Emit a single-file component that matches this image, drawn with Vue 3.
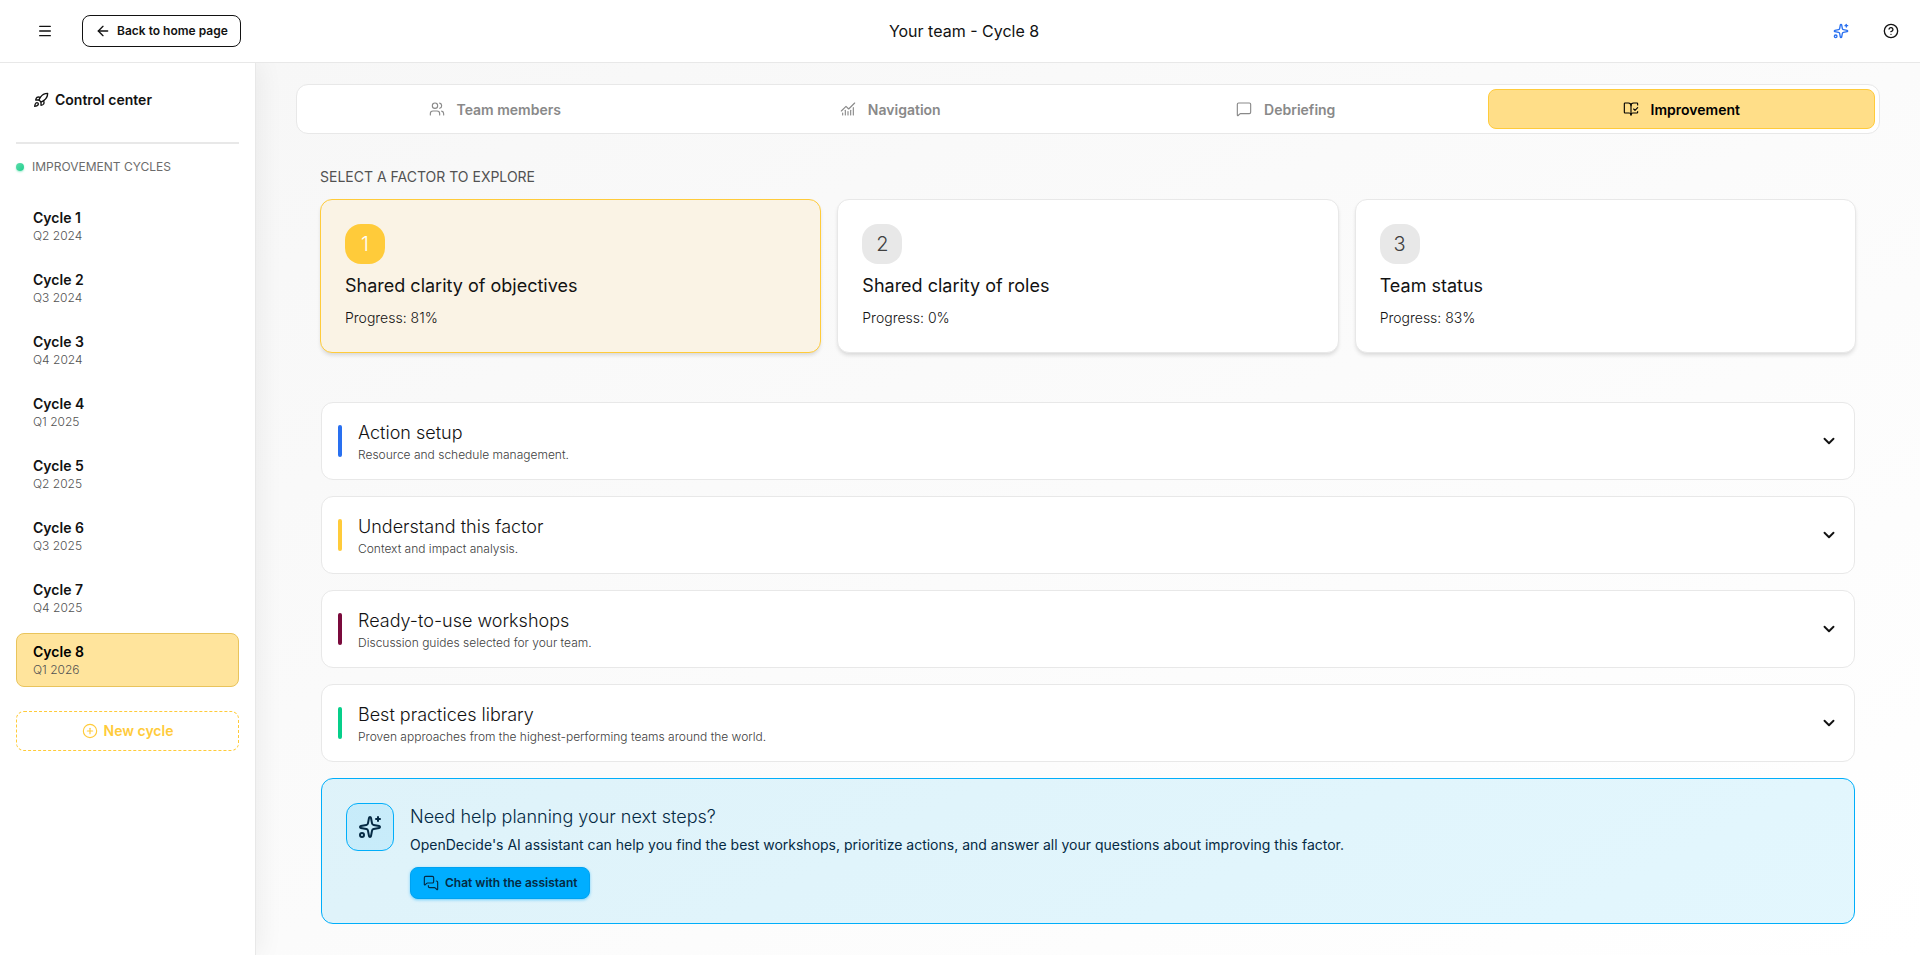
<script setup>
import { ref } from 'vue'

const icons = {
  menu: ['M4 5h16', 'M4 12h16', 'M4 19h16'],
  back: ['m12 19-7-7 7-7', 'M19 12H5'],
  help: ['M12 2a10 10 0 1 0 0 20 10 10 0 0 0 0-20', 'M9.09 9a3 3 0 0 1 5.83 1c0 2-3 3-3 3', 'M12 17h.01'],
  rocket: [
    'M4.5 16.5c-1.5 1.26-2 5-2 5s3.74-.5 5-2c.71-.84.7-2.13-.09-2.91a2.18 2.18 0 0 0-2.91-.09z',
    'm12 15-3-3a22 22 0 0 1 2-3.95A12.88 12.88 0 0 1 22 2c0 2.72-.78 7.5-6 11a22.35 22.35 0 0 1-4 2z',
    'M9 12H4s.55-3.03 2-4c1.62-1.08 5 0 5 0',
    'M12 15v5s3.03-.55 4-2c1.08-1.62 0-5 0-5',
  ],
  users: [
    'M16 21v-2a4 4 0 0 0-4-4H6a4 4 0 0 0-4 4v2',
    'M9 3a4 4 0 1 0 0 8 4 4 0 0 0 0-8',
    'M22 21v-2a4 4 0 0 0-3-3.87',
    'M16 3.13a4 4 0 0 1 0 7.75',
  ],
  chart: [
    'M12 16v5', 'M16 14v7', 'M20 10v11', 'M4 18v3', 'M8 14v7',
    'm22 3-8.646 8.646a.5.5 0 0 1-.708 0L9.354 8.354a.5.5 0 0 0-.707 0L2 15',
  ],
  message: ['M22 17a2 2 0 0 1-2 2H6.828a2 2 0 0 0-1.414.586l-2.202 2.202A.71.71 0 0 1 2 21.286V5a2 2 0 0 1 2-2h16a2 2 0 0 1 2 2z'],
  book: [
    'M12 21V7',
    'm16 12 2 2 4-4',
    'M22 6V4a1 1 0 0 0-1-1h-5a4 4 0 0 0-4 4 4 4 0 0 0-4-4H3a1 1 0 0 0-1 1v13a1 1 0 0 0 1 1h6a3 3 0 0 1 3 3 3 3 0 0 1 3-3h6a1 1 0 0 0 1-1v-1.3',
  ],
  sparkles: [
    'M11.017 2.814a1 1 0 0 1 1.966 0l1.051 5.558a2 2 0 0 0 1.594 1.594l5.558 1.051a1 1 0 0 1 0 1.966l-5.558 1.051a2 2 0 0 0-1.594 1.594l-1.051 5.558a1 1 0 0 1-1.966 0l-1.051-5.558a2 2 0 0 0-1.594-1.594l-5.558-1.051a1 1 0 0 1 0-1.966l5.558-1.051a2 2 0 0 0 1.594-1.594z',
    'M20 2v4', 'M22 4h-4', 'M4 18a2 2 0 1 0 0 4 2 2 0 0 0 0-4',
  ],
  plus: ['M12 2a10 10 0 1 0 0 20 10 10 0 0 0 0-20', 'M8 12h8', 'M12 8v8'],
  chevron: ['m6 9 6 6 6-6'],
  chat: [
    'M16 10a2 2 0 0 1-2 2H6.828a2 2 0 0 0-1.414.586l-2.202 2.202A.71.71 0 0 1 2 14.286V4a2 2 0 0 1 2-2h10a2 2 0 0 1 2 2z',
    'M20 9a2 2 0 0 1 2 2v10.286a.71.71 0 0 1-1.212.502l-2.202-2.202A2 2 0 0 0 17.172 19H10a2 2 0 0 1-2-2v-1',
  ],
}

const cycles = [
  'Q2 2024', 'Q3 2024', 'Q4 2024', 'Q1 2025', 'Q2 2025', 'Q3 2025', 'Q4 2025', 'Q1 2026',
].map((quarter, i) => ({ id: i + 1, quarter }))
const activeCycle = ref(8)

const tabs = [
  { name: 'Team members', icon: 'users' },
  { name: 'Navigation', icon: 'chart' },
  { name: 'Debriefing', icon: 'message' },
  { name: 'Improvement', icon: 'book' },
]
const activeTab = ref('Improvement')

const factors = [
  { id: 1, name: 'Shared clarity of objectives', progress: 81 },
  { id: 2, name: 'Shared clarity of roles', progress: 0 },
  { id: 3, name: 'Team status', progress: 83 },
]
const activeFactor = ref(1)

const sections = [
  { title: 'Action setup', text: 'Resource and schedule management.', tone: 'blue' },
  { title: 'Understand this factor', text: 'Context and impact analysis.', tone: 'yellow' },
  { title: 'Ready-to-use workshops', text: 'Discussion guides selected for your team.', tone: 'wine' },
  { title: 'Best practices library', text: 'Proven approaches from the highest-performing teams around the world.', tone: 'green' },
]
</script>

<template>
  <div class="app">
    <header class="topbar">
      <div class="side">
        <button class="icon-btn wide" type="button" aria-label="Toggle menu">
          <svg class="icon s16" viewBox="0 0 24 24"><path v-for="d in icons.menu" :key="d" :d="d" /></svg>
        </button>
        <a class="back" href="#">
          <svg class="icon s16" viewBox="0 0 24 24"><path v-for="d in icons.back" :key="d" :d="d" /></svg>
          Back to home page
        </a>
      </div>
      <h1 class="title">Your team - Cycle 8</h1>
      <div class="side end">
        <button class="icon-btn blue" type="button" aria-label="AI assistant">
          <svg class="icon s16" viewBox="0 0 24 24"><path v-for="d in icons.sparkles" :key="d" :d="d" /></svg>
        </button>
        <button class="icon-btn" type="button" aria-label="Help">
          <svg class="icon s16" viewBox="0 0 24 24"><path v-for="d in icons.help" :key="d" :d="d" /></svg>
        </button>
      </div>
    </header>

    <div class="body">
      <aside class="sidebar">
        <a class="control" href="#">
          <svg class="icon s16" viewBox="0 0 24 24"><path v-for="d in icons.rocket" :key="d" :d="d" /></svg>
          Control center
        </a>
        <hr class="rule">
        <h2 class="side-title"><span class="dot"></span>Improvement cycles</h2>
        <nav class="cycles" aria-label="Improvement cycles">
          <button
            v-for="c in cycles" :key="c.id" type="button"
            :class="['cycle', { active: c.id === activeCycle }]" @click="activeCycle = c.id"
          >
            <span class="cycle-name">Cycle {{ c.id }}</span>
            <span class="cycle-date">{{ c.quarter }}</span>
          </button>
        </nav>
        <button class="new-cycle" type="button">
          <svg class="icon s16 thin" viewBox="0 0 24 24"><path v-for="d in icons.plus" :key="d" :d="d" /></svg>
          New cycle
        </button>
      </aside>

      <main class="main">
        <nav class="tabs" aria-label="Cycle sections">
          <button
            v-for="t in tabs" :key="t.name" type="button"
            :class="['tab', { active: t.name === activeTab }]" @click="activeTab = t.name"
          >
            <svg class="icon s16 thin" viewBox="0 0 24 24"><path v-for="d in icons[t.icon]" :key="d" :d="d" /></svg>
            {{ t.name }}
          </button>
        </nav>

        <div class="content">
          <h2 class="heading">Select a factor to explore</h2>
          <div class="factors">
            <button
              v-for="f in factors" :key="f.id" type="button"
              :class="['factor', { active: f.id === activeFactor }]" @click="activeFactor = f.id"
            >
              <span class="number">{{ f.id }}</span>
              <span class="factor-name">{{ f.name }}</span>
              <span class="progress">Progress: {{ f.progress }}%</span>
            </button>
          </div>

          <div class="stack">
            <button v-for="s in sections" :key="s.title" class="section" type="button" aria-expanded="false">
              <span :class="['bar', s.tone]"></span>
              <span class="section-body">
                <span class="section-title">{{ s.title }}</span>
                <span class="section-text">{{ s.text }}</span>
              </span>
              <svg class="icon s18" viewBox="0 0 24 24"><path v-for="d in icons.chevron" :key="d" :d="d" /></svg>
            </button>

            <section class="help">
              <span class="help-icon">
                <svg class="icon s24" viewBox="0 0 24 24"><path v-for="d in icons.sparkles" :key="d" :d="d" /></svg>
              </span>
              <div class="help-body">
                <h3 class="help-title">Need help planning your next steps?</h3>
                <p class="help-text">OpenDecide's AI assistant can help you find the best workshops, prioritize actions, and answer all your questions about improving this factor.</p>
                <button class="chat" type="button">
                  <svg class="icon s16 thin" viewBox="0 0 24 24"><path v-for="d in icons.chat" :key="d" :d="d" /></svg>
                  Chat with the assistant
                </button>
              </div>
            </section>
          </div>
        </div>
      </main>
    </div>
  </div>
</template>

<style>
body {
  margin: 0;
}
</style>

<style scoped>
.app {
  display: flex;
  flex-direction: column;
  min-height: 100vh;
  font-family: Inter, "Liberation Sans", sans-serif;
  font-size: 14px;
  line-height: 20px;
  color: #121212;
  background: #fff;
}
.app * {
  box-sizing: border-box;
}
button {
  font: inherit;
  color: inherit;
  cursor: pointer;
}
a {
  color: inherit;
  text-decoration: none;
}
h1, h2, h3, p {
  margin: 0;
}
.icon {
  flex: none;
  fill: none;
  stroke: currentColor;
  stroke-width: 2;
  stroke-linecap: round;
  stroke-linejoin: round;
}
.s16 {
  width: 16px;
  height: 16px;
}
.s18 {
  width: 18px;
  height: 18px;
  stroke-width: 2.5;
}
.s24 {
  width: 24px;
  height: 24px;
}
.thin {
  stroke-width: 1.7;
}

.topbar {
  position: relative;
  z-index: 1;
  display: flex;
  align-items: center;
  padding: 15px 16px 15px 24px;
  border-bottom: 1px solid #e8e8e8;
  background: #fff;
}
.side {
  display: flex;
  flex: 1;
  align-items: center;
  gap: 16px;
}
.side.end {
  justify-content: flex-end;
  gap: 24px;
}
.icon-btn {
  display: grid;
  place-items: center;
  width: 26px;
  height: 32px;
  padding: 0;
  border: 0;
  background: none;
}
.icon-btn.wide {
  width: 42px;
}
.icon-btn.blue {
  color: #2970f0;
}
.back {
  display: flex;
  align-items: center;
  gap: 6px;
  height: 32px;
  padding: 0 12px;
  border: 1px solid #121212;
  border-radius: 8px;
  font-size: 12px;
  font-weight: 600;
}
.title {
  font-size: 16px;
  line-height: 24px;
  font-weight: 400;
}

.body {
  display: flex;
  flex: 1;
}
.sidebar {
  position: relative;
  flex: none;
  width: 256px;
  padding: 16px;
  border-right: 1px solid #e8e8e8;
  background: #fff;
  box-shadow: 4px 0 24px rgba(0, 0, 0, 0.06);
}
.control {
  display: flex;
  align-items: center;
  gap: 6px;
  height: 42px;
  padding: 0 17px;
  font-weight: 600;
}
.rule {
  height: 2px;
  margin: 21px 0 13px;
  border: 0;
  background: #e8e8e8;
}
.side-title {
  display: flex;
  align-items: center;
  gap: 8px;
  margin-bottom: 22px;
  font-size: 12px;
  font-weight: 400;
  text-transform: uppercase;
  color: #6b6b6b;
}
.dot {
  width: 8px;
  height: 8px;
  border-radius: 50%;
  background: linear-gradient(135deg, #5fdcab, #1fcf8d);
  box-shadow: 0 1px 2px rgba(31, 207, 141, 0.4);
}
.cycles {
  display: flex;
  flex-direction: column;
  gap: 8px;
}
.cycle {
  display: flex;
  flex-direction: column;
  justify-content: center;
  width: 100%;
  height: 54px;
  padding: 0 16px;
  border: 1px solid transparent;
  border-radius: 8px;
  background: none;
  text-align: left;
}
.cycle.active {
  border-color: #e9c45c;
  background: #ffe49c;
  color: #000;
}
.cycle-name {
  font-weight: 600;
}
.cycle-date {
  font-size: 12px;
  line-height: 16px;
  font-weight: 300;
  color: #525252;
}
.new-cycle {
  display: flex;
  align-items: center;
  justify-content: center;
  gap: 6px;
  width: 100%;
  height: 40px;
  margin-top: 24px;
  border: 1px dashed #ffcb3a;
  border-radius: 8px;
  background: none;
  font-weight: 600;
  color: #ffcb3a;
}

.main {
  flex: 1;
  min-width: 0;
  padding: 21px 40px 30px;
  background: linear-gradient(to bottom right, #f7f7f7, #fff);
}
.tabs {
  display: grid;
  grid-template-columns: repeat(4, 1fr);
  gap: 8px;
  padding: 4px;
  border: 1px solid #e8e8e8;
  border-radius: 12px;
  background: #fff;
}
.tab {
  display: flex;
  align-items: center;
  justify-content: center;
  gap: 12px;
  height: 40px;
  border: 1px solid transparent;
  border-radius: 8px;
  background: none;
  line-height: 21px;
  font-weight: 600;
  color: #898989;
}
.tab.active {
  border-color: #ffcb3a;
  background: #ffde88;
  color: #000;
}
.content {
  padding: 33px 24px 0;
}
.heading {
  margin-bottom: 12px;
  font-size: 14px;
  line-height: 20px;
  font-weight: 400;
  text-transform: uppercase;
  color: #525252;
}
.factors {
  display: grid;
  grid-template-columns: repeat(3, 1fr);
  gap: 16px;
}
.factor {
  display: flex;
  flex-direction: column;
  align-items: flex-start;
  padding: 24px;
  border: 1px solid #e8e8e8;
  border-radius: 12px;
  background: #fff;
  box-shadow: 0 3px 4px -1px rgba(0, 0, 0, 0.14);
}
.factor.active {
  border-color: #ffcb3a;
  background: #faf3e5;
}
.number {
  display: grid;
  place-items: center;
  width: 40px;
  height: 40px;
  margin-bottom: 8px;
  border-radius: 16px;
  background: #e8e8e8;
  font-size: 20px;
  font-weight: 300;
  color: #404040;
}
.factor.active .number {
  background: #ffcb3a;
  color: #fff;
}
.factor-name {
  margin-bottom: 8px;
  font-size: 18px;
  line-height: 28px;
}
.progress {
  font-weight: 300;
}
.stack {
  display: flex;
  flex-direction: column;
  gap: 16px;
  margin-top: 49px;
  padding: 0 1px;
}
.section {
  display: flex;
  align-items: center;
  gap: 16px;
  height: 78px;
  padding: 0 16px;
  border: 1px solid #e8e8e8;
  border-radius: 12px;
  background: #fff;
  text-align: left;
}
.bar {
  width: 4px;
  height: 32px;
  border-radius: 2px;
}
.bar.blue { background: #2970f0; }
.bar.yellow { background: #ffcb3a; }
.bar.wine { background: #7a0a3c; }
.bar.green { background: #06cf8a; }
.section-body {
  display: flex;
  flex: 1;
  flex-direction: column;
}
.section-title {
  font-size: 18px;
  line-height: 28px;
  font-weight: 300;
}
.section-text {
  font-size: 12px;
  line-height: 16px;
  font-weight: 300;
  color: #404040;
}
.help {
  display: flex;
  align-items: flex-start;
  gap: 16px;
  padding: 24px;
  border: 1px solid #00aefa;
  border-radius: 12px;
  background: rgba(0, 180, 250, 0.11);
  color: #052a44;
}
.help-icon {
  display: grid;
  place-items: center;
  flex: none;
  width: 48px;
  height: 48px;
  border: 1px solid #00aefa;
  border-radius: 12px;
  background: rgba(0, 174, 255, 0.1);
}
.help-title {
  margin-bottom: 4px;
  font-size: 18px;
  line-height: 28px;
  font-weight: 300;
}
.chat {
  display: flex;
  align-items: center;
  gap: 6px;
  height: 32px;
  margin-top: 12px;
  padding: 0 12px;
  border: 1px solid #00a2f0;
  border-radius: 8px;
  background: #00aeff;
  box-shadow: 0 1px 3px rgba(0, 174, 255, 0.5);
  font-size: 12px;
  font-weight: 600;
}
</style>
